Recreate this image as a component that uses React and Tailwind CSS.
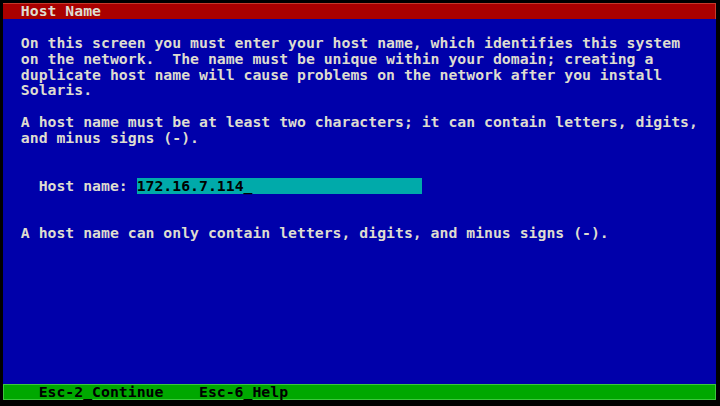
import React from 'react';

const rowCls = 'h-[15.88px] leading-[15.88px] whitespace-pre';

const intro = [
  '  On this screen you must enter your host name, which identifies this system',
  '  on the network.  The name must be unique within your domain; creating a',
  '  duplicate host name will cause problems on the network after you install',
  '  Solaris.',
];

const rules = [
  '  A host name must be at least two characters; it can contain letters, digits,',
  '  and minus signs (-).',
];

function Blank({ n = 1 }) {
  return Array.from({ length: n }).map((_, i) => <div key={i} className={rowCls}> </div>);
}

export default function App() {
  return (
    <div className="w-[720px] h-[406px] bg-black pt-[3px] pl-[3px] overflow-hidden">
      <div
        className="w-[713px] h-[397px] bg-[#0000aa] text-[#dedcd0] text-[14.8px] font-bold flex flex-col"
        style={{ fontFamily: '"DejaVu Sans Mono", "Liberation Mono", monospace' }}
      >
        {/* title bar */}
        <div className={`${rowCls} bg-[#aa0000] shadow-[inset_-1px_1px_0_#c83a2a]`}>{'  Host Name'}</div>
        <Blank />
        {intro.map((l, i) => <div key={i} className={rowCls}>{l}</div>)}
        <Blank />
        {rules.map((l, i) => <div key={i} className={rowCls}>{l}</div>)}
        <Blank n={2} />

        {/* host name field */}
        <div className={`${rowCls} flex`}>
          <span>{'    Host name: '}</span>
          <span className="w-[285px] bg-[#00aaaa] text-black">{'172.16.7.114_'}</span>
        </div>
        <Blank n={2} />
        <div className={rowCls}>{'  A host name can only contain letters, digits, and minus signs (-).'}</div>

        <div className="flex-1" />

        {/* function key bar */}
        <div className={`${rowCls} bg-[#00a800] text-black shadow-[inset_0_0_0_1px_#3cc83c] leading-[14px]`}>
          {'    Esc-2_Continue    Esc-6_Help'}
        </div>
      </div>
    </div>
  );
}
